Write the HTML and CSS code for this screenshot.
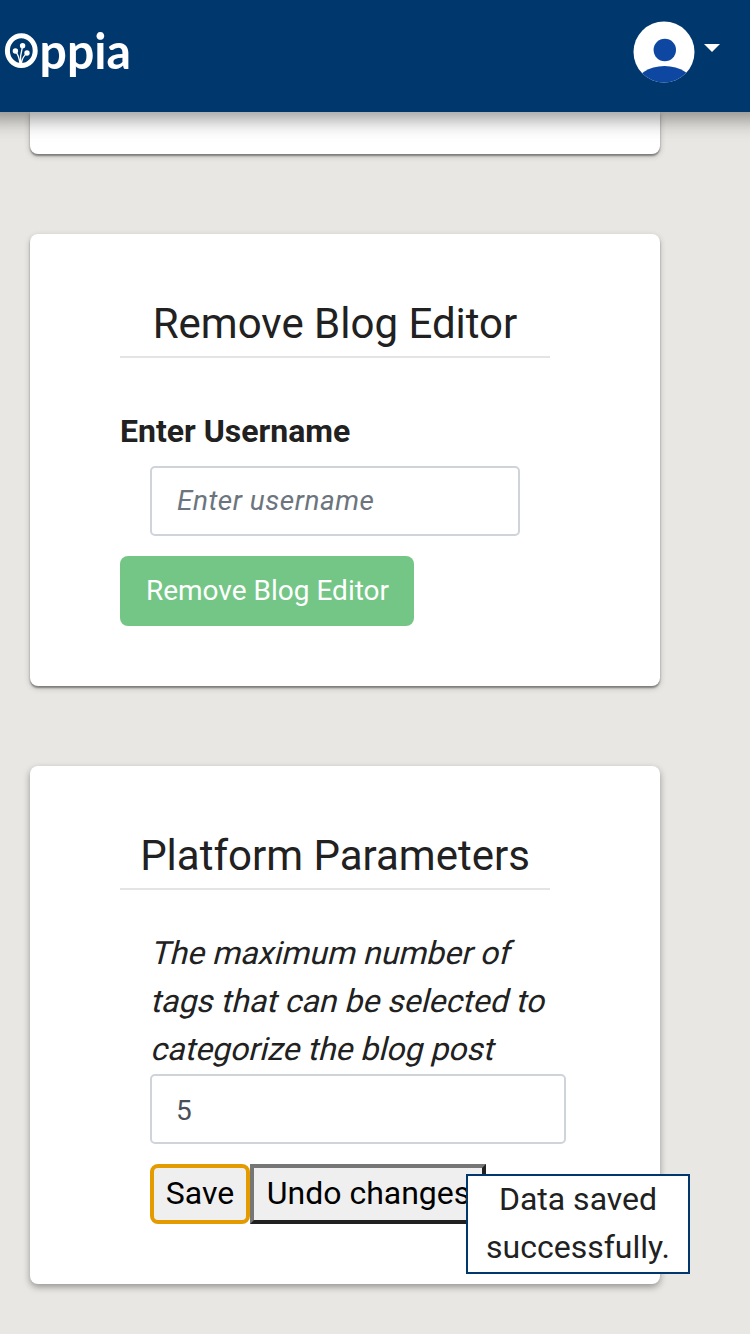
FILE: index.html
```html
<!DOCTYPE html>
<html lang="en">
<head>
<meta charset="utf-8">
<title>Blog Admin | Oppia</title>
<link rel="stylesheet" href="styles.css">
</head>
<body>
<header class="navbar">
  <svg class="logo" width="140" height="80" viewBox="0 0 140 80" role="img" aria-label="Oppia">
    <ellipse cx="21.3" cy="29.7" rx="13.9" ry="14.9" fill="none" stroke="#fff" stroke-width="5"/>
    <g fill="#fff">
      <circle cx="22.6" cy="24.700" r="2.7"/><circle cx="15.4" cy="30" r="2.7"/><circle cx="27" cy="32" r="2.7"/>
    </g>
    <path d="M20.600 43V35L22.400 26M15.600 30.500Q18.800 34 20.100 43M27 32.500Q22.500 35 21.300 43" fill="none" stroke="#fff" stroke-width="1.3"/>
    <text class="wordmark" x="39.500" y="47.500" textLength="91.500" lengthAdjust="spacingAndGlyphs">ppia</text>
  </svg>
  <div class="profile">
    <svg width="62" height="62" viewBox="0 0 62 62" aria-hidden="true">
      <defs><clipPath id="disc"><circle cx="31" cy="31" r="30.500"/></clipPath></defs>
      <g clip-path="url(#disc)">
        <rect width="62" height="62" fill="#fff"/>
        <circle cx="31.800" cy="29" r="11.200" fill="#0d47a1"/>
        <ellipse cx="31.500" cy="65" rx="29" ry="20" fill="#0d47a1"/>
      </g>
    </svg>
    <span class="caret"></span>
  </div>
</header>
<main class="content">
  <section class="card card-end"></section>
  <section class="card">
    <h2 class="title">Remove Blog Editor</h2>
    <label class="label" for="username">Enter Username</label>
    <input class="field field-user" id="username" placeholder="Enter username">
    <button class="remove">Remove Blog Editor</button>
  </section>
  <section class="card card-params">
    <h2 class="title">Platform Parameters</h2>
    <div class="param">
      <p class="description"><span class="slanted">The maximum number of</span> <span class="slanted">tags that can be selected to</span> <span class="slanted">categorize the blog post</span></p>
      <input class="field field-param" value="5" aria-label="Maximum number of tags">
      <div class="actions">
        <button class="action save">Save</button><button class="action undo">Undo changes</button>
      </div>
    </div>
  </section>
</main>
<div class="toast" role="status"><p class="message">Data saved successfully.</p></div>
</body>
</html>
```
FILE: styles.css
```css
* { box-sizing: border-box; }
body {
  margin: 0;
  height: 1334px;
  overflow: hidden;
  background: #e8e7e3;
  color: #212121;
  font: 32px/48px Roboto, sans-serif;
}
.navbar {
  position: relative;
  z-index: 1;
  display: flex;
  justify-content: space-between;
  align-items: flex-start;
  height: 112px;
  padding: 21px 30px 0 0;
  background: #00376d;
  box-shadow: 0 -10px 18px 18px rgba(0, 0, 0, .38);
}
.logo { display: block; overflow: visible; }
.wordmark {
  fill: #fff;
  font: 700 50px Lato, sans-serif;
}
.profile { display: flex; gap: 9px; }
.profile svg { display: block; }
.caret {
  height: 0;
  margin-top: 23px;
  border: 8px solid transparent;
  border-top-color: #fff;
  border-bottom: 0;
}
.content {
  display: flex;
  flex-direction: column;
  gap: 80px;
  width: 630px;
  margin-left: 30px;
}
.card {
  padding: 60px 110px 60px 90px;
  border-radius: 8px;
  background: #fff;
  box-shadow: 0 2px 2px rgba(0, 0, 0, .38), 0 2px 6px rgba(0, 0, 0, .2);
}
.card-end {
  height: 42px;
  padding: 0;
  border-radius: 0 0 8px 8px;
}
.card-params { box-shadow: 0 3px 7px rgba(0, 0, 0, .36); }
.title {
  margin: 0 0 40px;
  padding: 1px 0 3px;
  border-bottom: 2px solid #e4e4e4;
  font-size: 42px;
  font-weight: 400;
  line-height: 58px;
  text-align: center;
}
.label {
  display: block;
  margin-top: 49px;
  font-weight: 700;
}
.field {
  display: block;
  height: 70px;
  padding: 0 24px;
  border: 2px solid #ced4da;
  border-radius: 5px;
  background: #fff;
  color: #495057;
  font: 28px Roboto, sans-serif;
  outline: 0;
}
.field::placeholder {
  color: #6c757d;
  font-style: italic;
  letter-spacing: .5px;
  opacity: 1;
}
.field-user {
  width: 370px;
  margin: 11px 0 20px 30px;
  padding: 0 25px 2px;
}
.field-param {
  width: 416px;
  padding-top: 2px;
}
.remove {
  display: block;
  width: 294px;
  height: 70px;
  padding: 0 0 2px 1px;
  border: 0;
  border-radius: 8px;
  background: #74c686;
  color: #fff;
  font: 28px Roboto, sans-serif;
}
.param { padding-left: 30px; }
.description {
  width: 400px;
  margin: -1px 0 1px;
}
.slanted {
  display: block;
  white-space: nowrap;
  transform: skewX(-14deg);
  transform-origin: 0 35px;
}
.actions { display: flex; margin-top: 20px; }
.action {
  height: 60px;
  padding: 0 0 2px;
  background: #efefef;
  color: #000;
  font: 32px Roboto, sans-serif;
}
.save {
  width: 100px;
  border: 4px solid #e49b00;
  border-radius: 8px;
}
.undo {
  width: 236px;
  padding-left: 1px;
  border: 4px solid;
  border-color: #767676 #212121 #212121 #767676;
}
.toast {
  position: absolute;
  left: 466px;
  top: 1174px;
  width: 224px;
  height: 100px;
  padding: 0 16px;
  border: 2px solid #00376d;
  background: #fff;
  text-align: center;
}
.message { margin: -1px 0 0; }
```
